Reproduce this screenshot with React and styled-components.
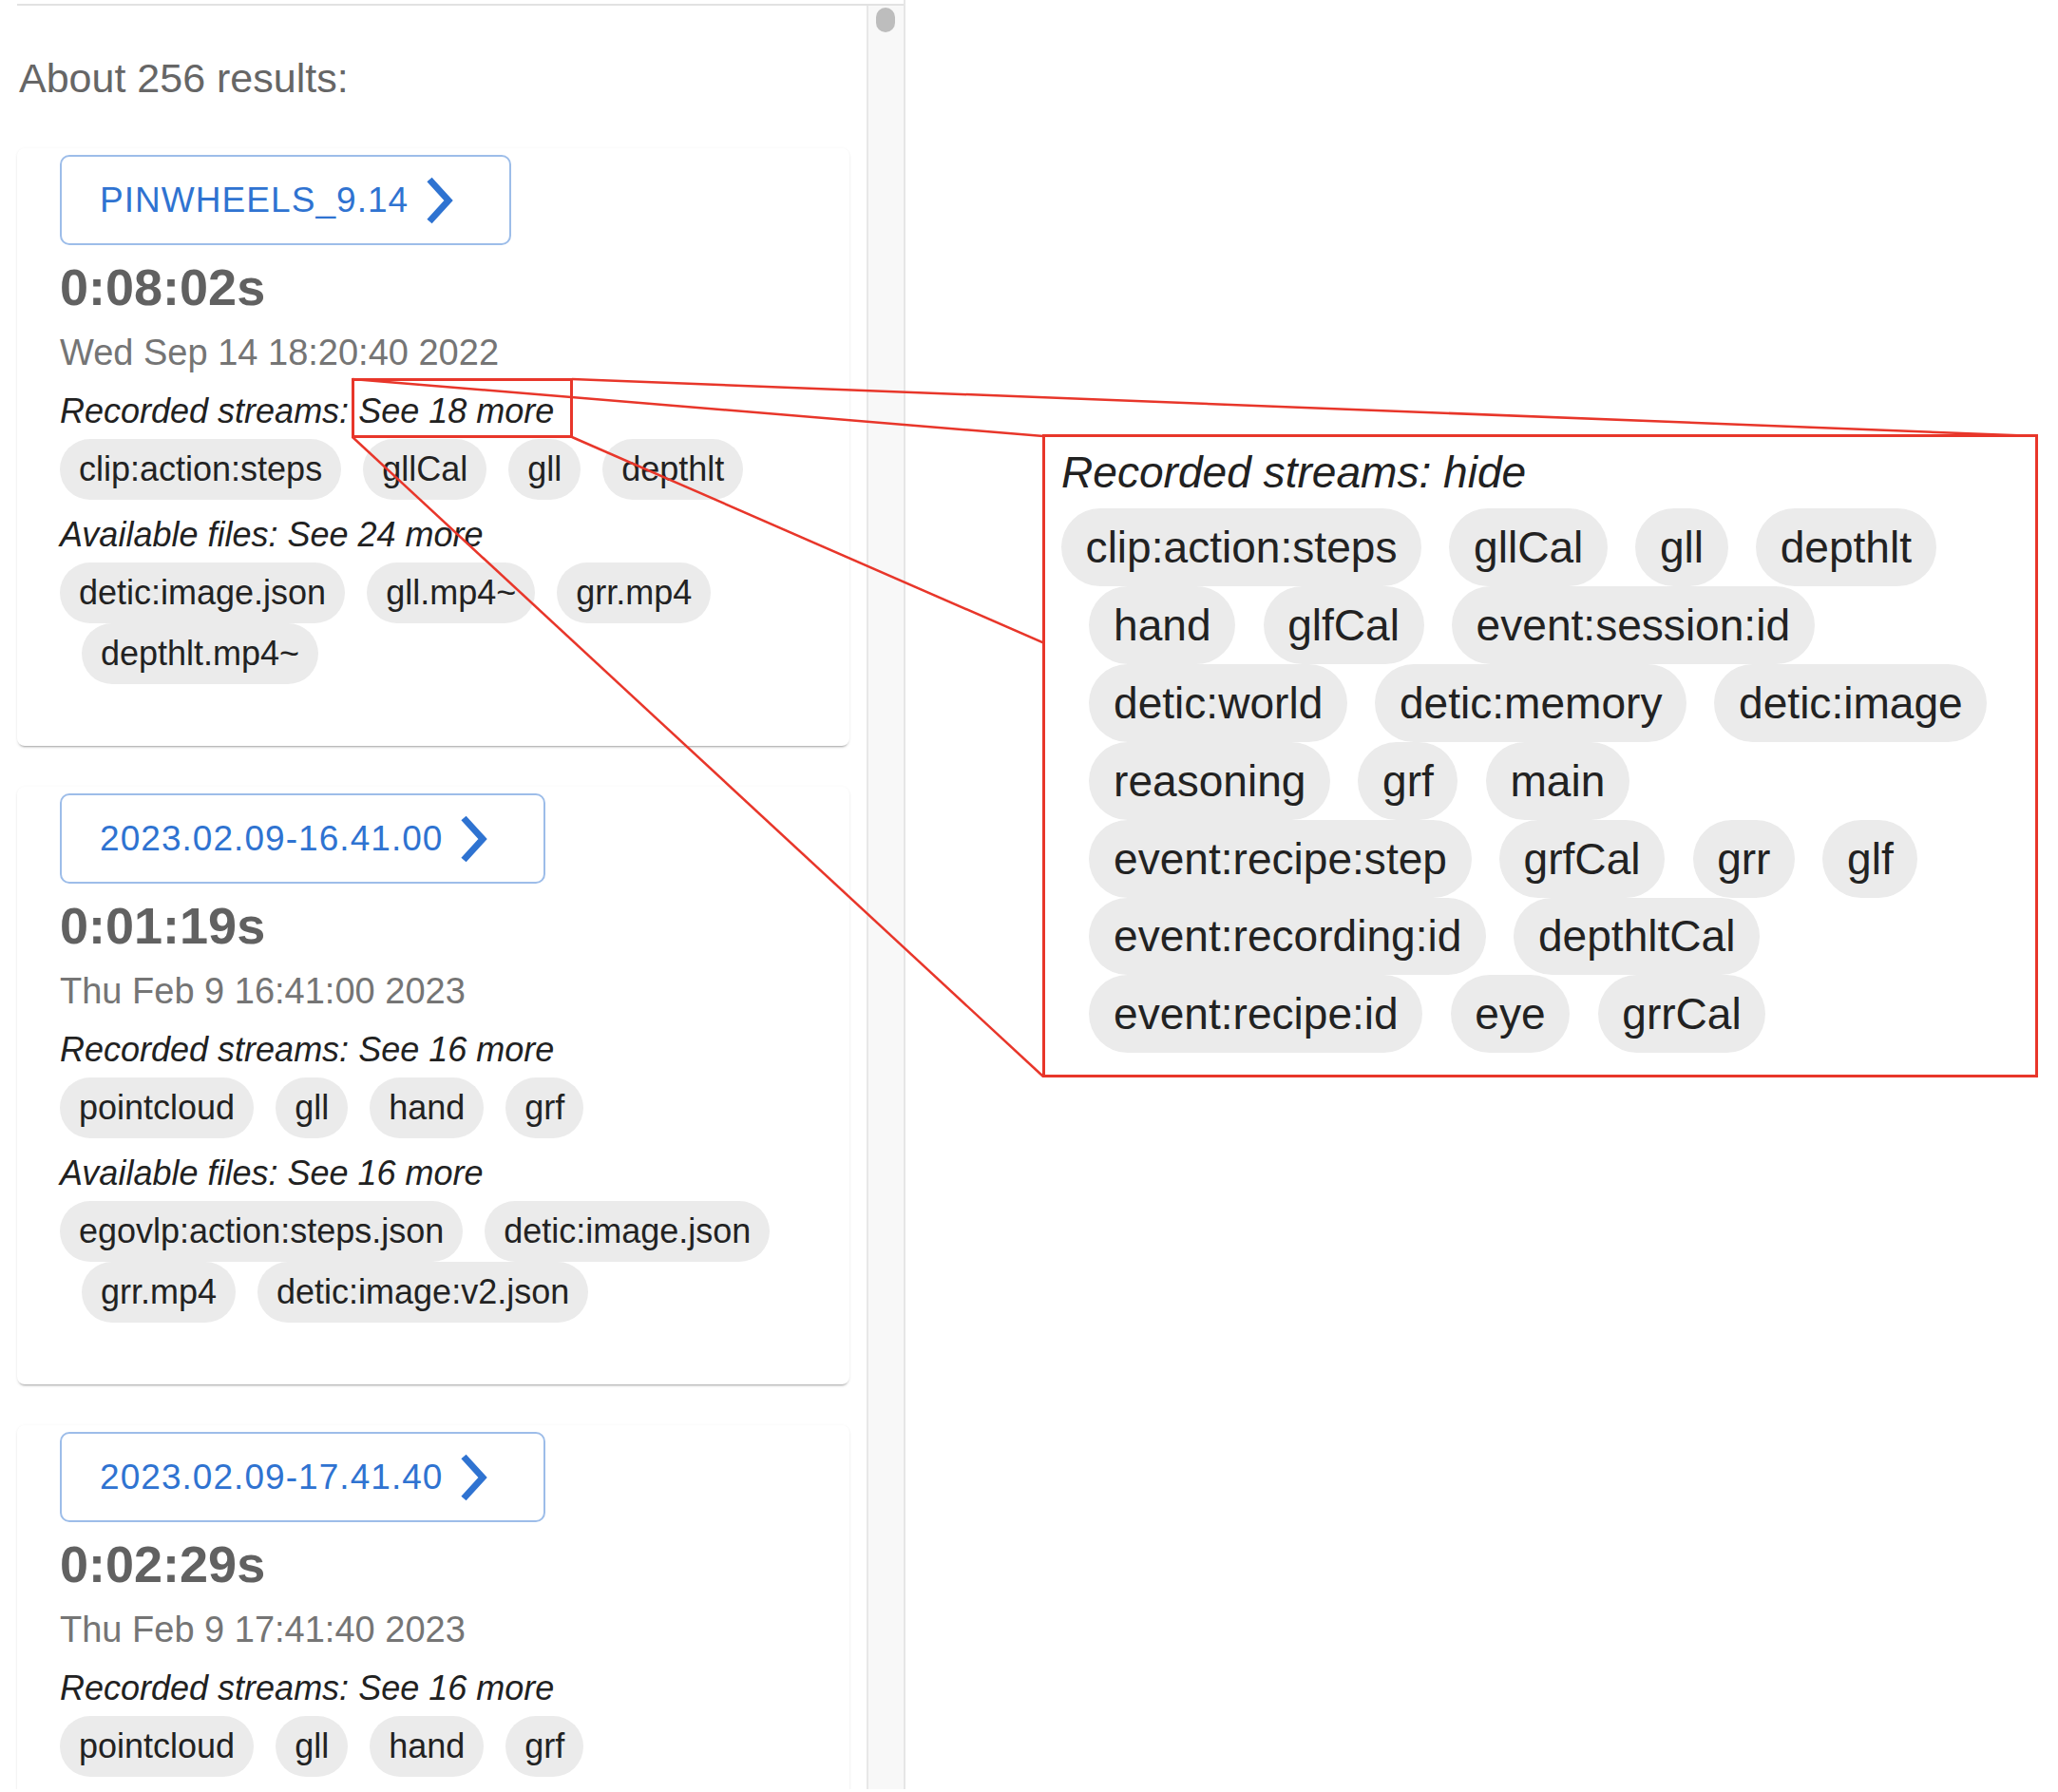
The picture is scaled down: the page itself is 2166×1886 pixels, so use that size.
import React from 'react';
import styled, { createGlobalStyle } from 'styled-components';

const RED = '#e8362a';

const Global = createGlobalStyle`
  html, body { margin: 0; padding: 0; background: #ffffff; }
  body { font-family: "Liberation Sans", Arial, Helvetica, sans-serif; }
`;

const Page = styled.div`
  position: relative;
  width: 2166px;
  height: 1886px;
  overflow: hidden;
  background: #ffffff;
`;

const Panel = styled.div`
  width: 951px;
  height: 1883px;
  border-right: 2px solid #e6e6e6;
  display: flex;
  flex-direction: column;
`;

const TopRule = styled.div`
  flex: none;
  margin: 4px 0 0 18px;
  height: 2px;
  background: #e2e2e2;
`;

const Body = styled.div`
  flex: 1;
  min-height: 0;
  display: flex;
`;

const List = styled.div`
  width: 912px;
  box-sizing: border-box;
  padding: 52px 18px 0;
  overflow: hidden;
`;

const Track = styled.div`
  flex: 1;
  background: #f8f8f8;
  border-left: 2px solid #e8e8e8;
  padding-top: 2px;
`;

const Thumb = styled.div`
  width: 20px;
  height: 26px;
  margin-left: 8px;
  border-radius: 10px;
  background: #bdbdbd;
`;

const Heading = styled.h2`
  margin: 0 0 50px;
  padding-left: 2px;
  font-size: 43px;
  line-height: 48px;
  font-weight: 400;
  color: #666666;
`;

const Card = styled.article`
  display: flex;
  flex-direction: column;
  align-items: flex-start;
  margin-bottom: 43px;
  padding: 7px 45px 65px;
  background: #ffffff;
  border-radius: 8px;
  box-shadow: 0 3px 2px -2px rgba(0, 0, 0, 0.28), 0 2px 3px 0 rgba(0, 0, 0, 0.08),
    0 0 3px 0 rgba(0, 0, 0, 0.04);
`;

const RecordingLink = styled.a`
  display: inline-flex;
  align-items: center;
  gap: 18px;
  box-sizing: border-box;
  height: 95px;
  padding: 0 58px 0 40px;
  border: 2px solid #9dbde9;
  border-radius: 10px;
  color: #2f73d1;
  font-size: 37px;
  letter-spacing: 1.05px;
  text-decoration: none;
  cursor: pointer;
`;

const Duration = styled.div`
  margin-top: 12px;
  font-size: 54px;
  line-height: 64px;
  font-weight: 700;
  color: #616161;
`;

const DateLine = styled.div`
  margin-top: 14px;
  font-size: 38px;
  line-height: 46px;
  color: #757575;
`;

const Section = styled.div`
  align-self: stretch;
  margin-top: 18px;
  & + & {
    margin-top: 16px;
  }
`;

const Label = styled.div`
  margin-bottom: ${(p) => 8 * p.$s}px;
  font-size: ${(p) => 36 * p.$s}px;
  line-height: ${(p) => 42 * p.$s}px;
  font-style: italic;
  color: #212121;
`;

const Toggle = styled.span`
  cursor: pointer;
`;

const ChipRow = styled.div`
  display: flex;
  flex-wrap: wrap;
`;

const Chip = styled.span`
  display: inline-flex;
  align-items: center;
  box-sizing: border-box;
  height: ${(p) => 64 * p.$s}px;
  margin-left: ${(p) => 23 * p.$s}px;
  padding: 0 ${(p) => 20 * p.$s}px;
  border-radius: ${(p) => 32 * p.$s}px;
  background: #ebebeb;
  color: #222222;
  font-size: ${(p) => 36 * p.$s}px;
  white-space: nowrap;
  &:first-child {
    margin-left: 0;
  }
`;

const Callout = styled.section`
  position: absolute;
  left: 1097px;
  top: 457px;
  z-index: 3;
  width: 1048px;
  height: 677px;
  box-sizing: border-box;
  padding: 11px 19px 0 17px;
  border: 3px solid ${RED};
  background: #ffffff;
`;

const Highlight = styled.div`
  position: absolute;
  left: 370px;
  top: 398px;
  z-index: 2;
  width: 233px;
  height: 63px;
  box-sizing: border-box;
  border: 3px solid ${RED};
`;

const Leaders = styled.svg`
  position: absolute;
  left: 0;
  top: 0;
  z-index: 2;
  pointer-events: none;
`;

const Chevron = () => (
  <svg width="30" height="52" viewBox="0 0 30 52" aria-hidden="true">
    <polyline
      points="4,4 24,26 4,48"
      fill="none"
      stroke="#2f73d1"
      strokeWidth="7"
      strokeLinejoin="miter"
      strokeLinecap="butt"
    />
  </svg>
);

const recordings = [
  {
    name: 'PINWHEELS_9.14',
    duration: '0:08:02s',
    date: 'Wed Sep 14 18:20:40 2022',
    streamsMore: 18,
    streams: ['clip:action:steps', 'gllCal', 'gll', 'depthlt'],
    filesMore: 24,
    files: ['detic:image.json', 'gll.mp4~', 'grr.mp4', 'depthlt.mp4~'],
  },
  {
    name: '2023.02.09-16.41.00',
    duration: '0:01:19s',
    date: 'Thu Feb 9 16:41:00 2023',
    streamsMore: 16,
    streams: ['pointcloud', 'gll', 'hand', 'grf'],
    filesMore: 16,
    files: ['egovlp:action:steps.json', 'detic:image.json', 'grr.mp4', 'detic:image:v2.json'],
  },
  {
    name: '2023.02.09-17.41.40',
    duration: '0:02:29s',
    date: 'Thu Feb 9 17:41:40 2023',
    streamsMore: 16,
    streams: ['pointcloud', 'gll', 'hand', 'grf'],
    filesMore: 0,
    files: null,
  },
];

const allStreams = [
  'clip:action:steps', 'gllCal', 'gll', 'depthlt', 'hand', 'glfCal', 'event:session:id',
  'detic:world', 'detic:memory', 'detic:image', 'reasoning', 'grf', 'main',
  'event:recipe:step', 'grfCal', 'grr', 'glf', 'event:recording:id', 'depthltCal',
  'event:recipe:id', 'eye', 'grrCal',
];

const ChipList = ({ items, s = 1 }) => (
  <ChipRow>
    {items.map((t) => (
      <Chip key={t} $s={s}>{t}</Chip>
    ))}
  </ChipRow>
);

const RecordingCard = ({ r }) => (
  <Card>
    <RecordingLink>
      <span>{r.name}</span>
      <Chevron />
    </RecordingLink>
    <Duration>{r.duration}</Duration>
    <DateLine>{r.date}</DateLine>
    <Section>
      <Label $s={1}>
        Recorded streams: <Toggle>See {r.streamsMore} more</Toggle>
      </Label>
      <ChipList items={r.streams} />
    </Section>
    {r.files && (
      <Section>
        <Label $s={1}>
          Available files: <Toggle>See {r.filesMore} more</Toggle>
        </Label>
        <ChipList items={r.files} />
      </Section>
    )}
  </Card>
);

export default function App() {
  return (
    <Page>
      <Global />
      <Panel>
        <TopRule />
        <Body>
          <List>
            <Heading>About 256 results:</Heading>
            {recordings.map((r) => (
              <RecordingCard key={r.name} r={r} />
            ))}
          </List>
          <Track>
            <Thumb />
          </Track>
        </Body>
      </Panel>

      <Highlight />
      <Leaders width="2166" height="1886" viewBox="0 0 2166 1886">
        <g stroke={RED} strokeWidth="2.5" fill="none">
          <line x1="371" y1="399" x2="1098" y2="459" />
          <line x1="602" y1="399" x2="2144" y2="459" />
          <line x1="371" y1="460" x2="1098" y2="1133" />
          <line x1="602" y1="460" x2="2144" y2="1133" />
        </g>
      </Leaders>
      <Callout>
        <Label $s={1.28}>
          Recorded streams: <Toggle>hide</Toggle>
        </Label>
        <ChipList items={allStreams} s={1.28} />
      </Callout>
    </Page>
  );
}
